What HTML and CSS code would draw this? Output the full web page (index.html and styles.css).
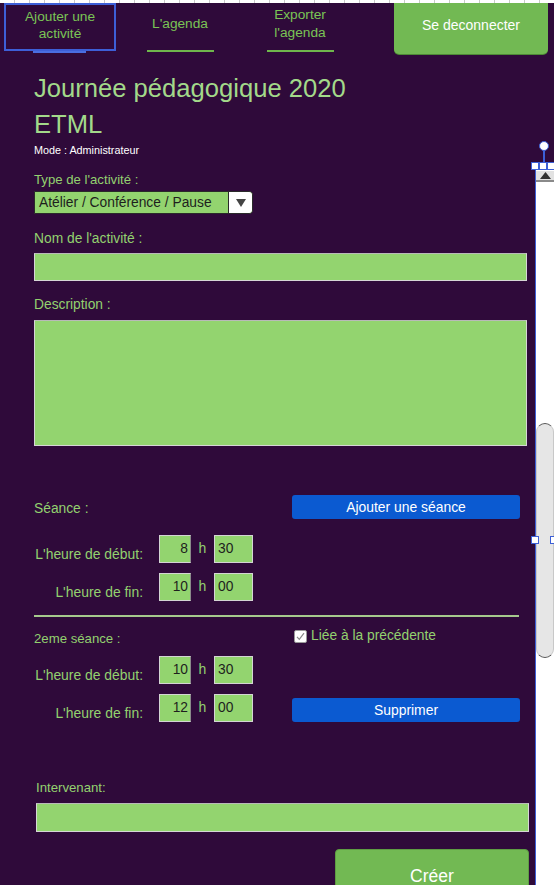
FILE: index.html
```html
<!DOCTYPE html>
<html lang="fr">
<head>
<meta charset="utf-8">
<title>Journée pédagogique 2020 - ETML</title>
<link rel="stylesheet" href="styles.css">
</head>
<body>
<div class="ruler"></div>
<nav class="nav">
  <div class="nav-item active"><span class="nav-text">Ajouter une<br>activité</span><span class="active-bar"></span></div>
  <div class="nav-item"><span class="nav-text">L'agenda</span><span class="nav-bar"></span></div>
  <div class="nav-item"><span class="nav-text tall">Exporter<br>l'agenda</span><span class="nav-bar"></span></div>
  <div class="nav-btn">Se deconnecter</div>
</nav>

<main class="content">
  <h1 class="title">Journée pédagogique 2020<br>ETML</h1>
  <div class="mode">Mode : Administrateur</div>

  <div class="label small lbl-type">Type de l'activité :</div>
  <div class="select">
    <span class="select-value">Atélier / Conférence / Pause</span>
    <span class="select-arrow"><svg width="10" height="8" viewBox="0 0 10 8"><path d="M0 0H10L5 8Z" fill="#444"/></svg></span>
  </div>

  <div class="label lbl-nom">Nom de l'activité :</div>
  <div class="input"></div>

  <div class="label lbl-desc">Description :</div>
  <div class="textarea"></div>

  <div class="seance-head">
    <span class="label">Séance :</span>
    <div class="btn-blue">Ajouter une séance</div>
  </div>

  <div class="time-row row-a">
    <span class="time-label">L'heure de début:</span>
    <span class="tbox hour">8</span><span class="h">h</span><span class="tbox min">30</span>
  </div>
  <div class="time-row row-b">
    <span class="time-label">L'heure de fin:</span>
    <span class="tbox hour">10</span><span class="h">h</span><span class="tbox min">00</span>
  </div>

  <div class="divider"></div>

  <div class="seance2-head">
    <span class="label small seance2-label">2eme séance :</span>
    <span class="check-group">
      <span class="checkbox"><svg width="11" height="11" viewBox="0 0 11 11"><path d="M2 5.8L4.3 8.3L9 2.2" fill="none" stroke="#8a8a8a" stroke-width="1.2"/></svg></span>
      <span class="check-text">Liée à la précédente</span>
    </span>
  </div>

  <div class="time-row row-c">
    <span class="time-label">L'heure de début:</span>
    <span class="tbox hour">10</span><span class="h">h</span><span class="tbox min">30</span>
  </div>
  <div class="time-row row-b">
    <span class="time-label">L'heure de fin:</span>
    <span class="tbox hour">12</span><span class="h">h</span><span class="tbox min">00</span>
    <div class="btn-blue btn-del">Supprimer</div>
  </div>

  <div class="interv">
    <div class="label small lbl-interv">Intervenant:</div>
    <div class="input interv-input"></div>
    <div class="create-row"><div class="btn-create">Créer</div></div>
  </div>
</main>

<div class="vscroll">
  <div class="vs-up"><svg width="11" height="7" viewBox="0 0 11 7"><path d="M0 7H11L5.5 0Z" fill="#333"/></svg></div>
  <div class="vs-thumb"></div>
</div>
<div class="sel-line"></div>
<div class="sel-circle"></div>
<div class="handle h1"></div>
<div class="handle h2"></div>
<div class="handle h3"></div>
<div class="handle h4"></div>
<div class="handle h5"></div>
</body>
</html>
```

FILE: styles.css
```css
html, body {
  margin: 0;
  padding: 0;
  overflow: hidden;
  height: 885px;
}
body {
  background: #2f0a3a;
  font-family: "Liberation Sans", Arial, sans-serif;
  color: #93d16f;
  position: relative;
}

.ruler {
  height: 3px;
  background: repeating-linear-gradient(to right, #ffffff 0 14px, #c9c9c9 14px 15px);
}

/* NAV */
.nav {
  display: flex;
  align-items: flex-start;
  gap: 8px;
  padding-left: 4px;
  height: 51px;
}
.nav-item {
  width: 112px;
  height: 50px;
  box-sizing: border-box;
  display: flex;
  flex-direction: column;
  align-items: center;
  position: relative;
}
.nav-text {
  flex: 1;
  display: flex;
  align-items: center;
  justify-content: center;
  text-align: center;
  font-size: 13.7px;
  line-height: 17.5px;
  color: #7ac455;
  padding-bottom: 5px;
}
.nav-text.tall {
  line-height: 18px;
}
.nav-bar {
  width: 67px;
  height: 2px;
  background: #6fb64c;
  margin-bottom: 1px;
}
.nav-item.active {
  height: 48px;
  border: 2px solid #3d5fd7;
}
.nav-item.active .nav-text {
  line-height: 17px;
  padding-bottom: 5px;
}
.active-bar {
  position: absolute;
  left: 27px;
  bottom: -4px;
  width: 53px;
  height: 2px;
  background: #4a6ee0;
}
.nav-btn {
  margin-left: 30px;
  width: 154px;
  height: 51px;
  box-sizing: border-box;
  background: #72b953;
  border-radius: 0 0 5px 5px;
  box-shadow: 0 1px 0 #4d8a36;
  color: #ffffff;
  font-size: 14px;
  display: flex;
  align-items: center;
  justify-content: center;
  padding-bottom: 7px;
}

/* CONTENT */
.content {
  padding: 0 27px 0 34px;
}
.title {
  margin: 16px 0 0;
  font-weight: normal;
  font-size: 25.6px;
  line-height: 36px;
  color: #a3d98a;
}
.mode {
  margin-top: 1px;
  font-size: 10.8px;
  line-height: 14px;
  color: #ffffff;
}
.label {
  font-size: 13.8px;
  line-height: 16px;
  color: #93d16f;
}
.label.small {
  font-size: 13.2px;
}
.lbl-type { margin-top: 15px; }
.lbl-nom { margin-top: 17px; }
.lbl-desc { margin-top: 16px; }

.select {
  margin-top: 3px;
  width: 219px;
  height: 23px;
  box-sizing: border-box;
  display: flex;
  background: #93d46f;
  border: 1px solid #2a2a2a;
  border-radius: 0 4px 4px 0;
  overflow: hidden;
}
.select-value {
  flex: 1;
  padding-left: 4px;
  font-size: 13.8px;
  line-height: 21px;
  color: #1e1e1e;
}
.select-arrow {
  width: 23px;
  background: #ffffff;
  border-left: 1px solid #2a2a2a;
  display: flex;
  align-items: center;
  justify-content: center;
}

.input {
  margin-top: 6px;
  height: 28px;
  box-sizing: border-box;
  background: #93d46f;
  border: 1px solid #d6d6d6;
  border-top-color: #b9b9b9;
}
.textarea {
  margin-top: 7px;
  height: 126px;
  box-sizing: border-box;
  background: #93d46f;
  border: 1px solid #d6d6d6;
  border-top-color: #b9b9b9;
}

.seance-head {
  margin-top: 49px;
  height: 24px;
  display: flex;
  align-items: center;
}
.seance-head .label {
  margin-top: 4px;
}
.btn-blue {
  margin-left: auto;
  margin-right: 7px;
  width: 228px;
  height: 24px;
  box-sizing: border-box;
  background: #0b5ad1;
  border-radius: 3px;
  color: #ffffff;
  font-size: 13.9px;
  line-height: 24px;
  text-align: center;
}

.time-row {
  display: flex;
  align-items: center;
  height: 28px;
}
.row-a { margin-top: 16px; }
.row-b { margin-top: 10px; }
.row-c { margin-top: 9px; }
.time-label {
  width: 109px;
  margin-right: 16px;
  text-align: right;
  font-size: 13.9px;
  line-height: 16px;
  color: #93d16f;
  margin-top: 9px;
}
.tbox {
  height: 28px;
  box-sizing: border-box;
  background: #93d46f;
  border: 1px solid #d4d4d4;
  font-size: 13.8px;
  line-height: 26px;
  color: #1e1e1e;
}
.tbox.hour {
  width: 32px;
  text-align: right;
  padding-right: 2px;
  border-right-color: #8a8a8a;
}
.tbox.min {
  width: 39px;
  padding-left: 3px;
}
.h {
  width: 23px;
  text-align: center;
  font-size: 14px;
  line-height: 16px;
  color: #93d16f;
  margin-bottom: 2px;
}
.btn-del {
  align-self: flex-end;
}

.divider {
  margin-top: 14px;
  width: 485px;
  height: 2px;
  background: #a6c98d;
}

.seance2-head {
  margin-top: 10px;
  display: flex;
  align-items: flex-start;
}
.seance2-label {
  width: 260px;
  margin-top: 4px;
}
.check-group {
  display: flex;
  align-items: center;
  gap: 4px;
  height: 16px;
  margin-top: 1px;
}
.checkbox {
  width: 13px;
  height: 13px;
  box-sizing: border-box;
  background: #ffffff;
  border: 1px solid #9a9a9a;
  border-radius: 2px;
  display: flex;
  align-items: center;
  justify-content: center;
}
.check-text {
  font-size: 13.8px;
  line-height: 16px;
  color: #93d16f;
}

.interv {
  margin-left: 2px;
  margin-right: -2px;
}
.lbl-interv {
  margin-top: 58px;
}
.interv-input {
  margin-top: 7px;
  height: 29px;
}
.create-row {
  margin-top: 17px;
  display: flex;
  justify-content: flex-end;
}
.btn-create {
  width: 194px;
  height: 50px;
  box-sizing: border-box;
  background: #72b953;
  border: 1px solid #5e9c43;
  border-radius: 4px 4px 0 0;
  color: #ffffff;
  font-size: 17.5px;
  display: flex;
  align-items: center;
  justify-content: center;
  padding-top: 5px;
}

/* selected scrollbar widget overlay (mockup editor) */
.vscroll {
  position: absolute;
  left: 535px;
  top: 166px;
  width: 19px;
  bottom: 0;
  box-sizing: border-box;
  background: #ffffff;
  border-left: 1px solid #3c5fd6;
}
.vs-up {
  position: absolute;
  left: 0;
  top: 5px;
  width: 18px;
  height: 9px;
  background: #e2e2e2;
  border-bottom: 2px solid #8a8a8a;
  display: flex;
  align-items: center;
  justify-content: center;
}
.vs-thumb {
  position: absolute;
  left: 0;
  top: 257px;
  width: 18px;
  height: 235px;
  box-sizing: border-box;
  background: #e6e6e6;
  border: 1px solid #555555;
  border-left-color: #c8c8c8;
  border-right-color: #c8c8c8;
  border-radius: 9px;
}
.sel-line {
  position: absolute;
  left: 543px;
  top: 149px;
  width: 2px;
  height: 14px;
  background: #3c5fd6;
}
.sel-circle {
  position: absolute;
  left: 539px;
  top: 141px;
  width: 8px;
  height: 8px;
  border: 1.5px solid #3c5fd6;
  border-radius: 50%;
  background: #ffffff;
}
.handle {
  position: absolute;
  width: 6px;
  height: 6px;
  border: 1.5px solid #3c5fd6;
  background: #ffffff;
}
.h1 { left: 531px; top: 162px; }
.h2 { left: 539px; top: 162px; }
.h3 { left: 547px; top: 162px; }
.h4 { left: 531px; top: 536px; }
.h5 { left: 550px; top: 536px; }
```
